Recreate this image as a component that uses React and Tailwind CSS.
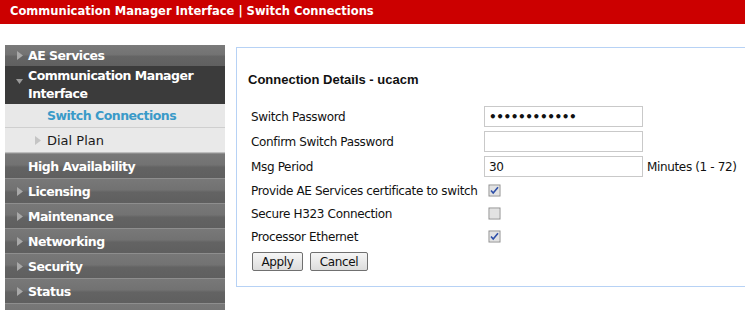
import React from "react";

const menuItems = ["Licensing", "Maintenance", "Networking", "Security", "Status"];

function Arrow({ light }) {
  return (
    <svg width="6" height="9" viewBox="0 0 6 9" className="shrink-0">
      <path d="M0 0 L6 4.5 L0 9 Z" fill={light ? "#c4c4c4" : "#a8a8a8"} />
    </svg>
  );
}

function MenuItem({ label, arrow = true }) {
  return (
    <div className="h-[25px] flex items-center border-t border-[#8e8e8e] bg-[linear-gradient(#787878_0%,#727272_45%,#636363_55%,#5f5f5f_100%)]">
      <div className="w-[23px] flex justify-end pr-[5px]">{arrow && <Arrow />}</div>
      <span className="pt-[2px] text-[12.5px] tracking-[-0.5px] font-bold text-white">{label}</span>
    </div>
  );
}

function CheckBox({ checked }) {
  return (
    <svg width="13" height="13" viewBox="0 0 13 13">
      <rect x="0.5" y="0.5" width="12" height="12" fill="#8f8f8f" />
      <rect x="1.5" y="1.5" width="10" height="10" fill="#f4f4f4" />
      <rect x="2" y="2" width="9" height="9" fill="#e2e2e2" />
      {checked && (
        <path d="M3 6.5 L5.2 9 L10 3.2" stroke="#2e4fa8" strokeWidth="1.6" fill="none" />
      )}
    </svg>
  );
}

function Field({ children }) {
  return (
    <div className="w-[159px] h-[21px] border border-[#c9c9c9] bg-white flex items-center px-[4px] text-[12px] text-[#111]">
      {children}
    </div>
  );
}

export default function App() {
  return (
    <div className="w-[745px] h-[310px] bg-white overflow-hidden font-['DejaVu_Sans',Verdana,sans-serif]">
      <div className="h-[24px] bg-[#cc0000] flex items-center pl-[10px]">
        <span className="text-white font-bold text-[11.5px]">
          Communication Manager Interface | Switch Connections
        </span>
      </div>

      <div className="flex items-start">
        {/* Sidebar */}
        <div className="w-[220px] ml-[5px] mt-[21px] shrink-0">
          <div className="h-[21px] flex items-center bg-[linear-gradient(#7a7a7a_0%,#737373_45%,#646464_55%,#606060_100%)]">
            <div className="w-[23px] flex justify-end pr-[5px]"><Arrow /></div>
            <span className="pt-[2px] text-[12.5px] tracking-[-0.5px] font-bold text-white">AE Services</span>
          </div>
          <div className="h-[38px] bg-[#3b3b3b] flex items-start pt-[1px]">
            <div className="w-[23px] flex justify-end pr-[5px] pt-[12px]">
              <svg width="7" height="5" viewBox="0 0 7 5">
                <path d="M0 0 L7 0 L3.5 5 Z" fill="#9a9a9a" />
              </svg>
            </div>
            <span className="text-[12.5px] tracking-[-0.5px] font-bold text-white leading-[18px]">
              Communication Manager
              <br />
              Interface
            </span>
          </div>
          <div className="h-[24px] bg-[#e8e8e8] border-b border-[#cfcfcf] flex items-center pl-[42px]">
            <span className="pt-[2px] text-[12.5px] tracking-[-0.5px] font-bold text-[#3a9ac8]">Switch Connections</span>
          </div>
          <div className="h-[25px] bg-[#e9e9e9] flex items-center border-b border-[#bdbdbd]">
            <div className="w-[42px] flex justify-end pr-[6px]"><Arrow light /></div>
            <span className="pt-[1px] text-[13px] text-[#1a1a1a]">Dial Plan</span>
          </div>
          <MenuItem label="High Availability" arrow={false} />
          {menuItems.map((m) => (
            <MenuItem key={m} label={m} />
          ))}
          <div className="h-[25px] border-t border-[#8e8e8e] bg-[linear-gradient(#787878_0%,#727272_45%,#636363_55%,#5f5f5f_100%)]" />
        </div>

        {/* Content panel */}
        <div className="ml-[11px] mt-[23px] flex-1 h-[240px] border border-[#b7d2f5] border-r-0 pl-[11px] pt-[24px]">
          <div className="font-['Liberation_Sans',Arial,sans-serif] font-bold text-[13px] leading-[16px] text-[#111]">
            Connection Details - ucacm
          </div>
          <div className="mt-[16px] pl-[3px] text-[12px] tracking-[-0.35px] text-[#111] whitespace-nowrap">
            <div className="h-[25px] flex items-center">
              <span className="w-[233px] pt-[1px]">Switch Password</span>
              <Field>
                <span className="text-[12px] font-bold tracking-[-0.4px]">••••••••••••</span>
              </Field>
            </div>
            <div className="h-[25px] flex items-center">
              <span className="w-[233px] pt-[1px]">Confirm Switch Password</span>
              <Field />
            </div>
            <div className="h-[25px] flex items-center">
              <span className="w-[233px] pt-[1px]">Msg Period</span>
              <Field>30</Field>
              <span className="ml-[4px]">Minutes (1 - 72)</span>
            </div>
            <div className="h-[23px] flex items-center">
              <span className="w-[237px]">Provide AE Services certificate to switch</span>
              <CheckBox checked />
            </div>
            <div className="h-[23px] flex items-center">
              <span className="w-[237px]">Secure H323 Connection</span>
              <CheckBox />
            </div>
            <div className="h-[23px] flex items-center">
              <span className="w-[237px]">Processor Ethernet</span>
              <CheckBox checked />
            </div>
            <div className="mt-[4px] flex gap-[7px] pl-[1px]">
              <button className="w-[51px] h-[19px] border border-[#707070] rounded-[2px] bg-[linear-gradient(#f6f6f6,#dcdcdc)] text-[12px] leading-none text-[#111]">
                Apply
              </button>
              <button className="w-[58px] h-[19px] border border-[#707070] rounded-[2px] bg-[linear-gradient(#f6f6f6,#dcdcdc)] text-[12px] leading-none text-[#111]">
                Cancel
              </button>
            </div>
          </div>
        </div>
      </div>
    </div>
  );
}
